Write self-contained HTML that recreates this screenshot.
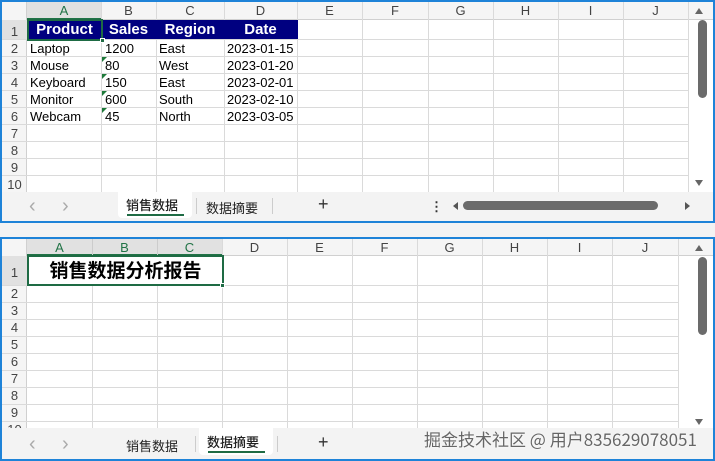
<!DOCTYPE html>
<html><head><meta charset="utf-8"><style>
*{margin:0;padding:0;box-sizing:border-box}
body{width:715px;height:461px;background:#f3f3f3;position:relative;overflow:hidden;font-family:"Liberation Sans","Noto Sans CJK SC",sans-serif}
.p{position:absolute;left:0;width:715px;border:2px solid #1e83d8;background:#fff;overflow:hidden}
.a{position:absolute}
.vl{position:absolute;width:1px;background:#dadada}
.hl{position:absolute;height:1px;background:#dadada}
.ch{position:absolute;font-size:13px;color:#444;text-align:center}
.rh{position:absolute;font-size:13px;color:#444;width:25px;text-align:center}
.c{position:absolute;font-size:13px;color:#000;white-space:nowrap}
.tab{position:absolute;font-size:13px;font-family:"Noto Sans CJK SC",sans-serif;color:#222}
.tri{position:absolute;width:0;height:0;border-top:5px solid #1e7a3a;border-right:5px solid transparent}
.chev{position:absolute;font-size:20px;color:#aaa;line-height:20px}
</style></head><body>

<!-- TOP PANEL -->
<div class="p" style="top:0;height:223px">
 <div class="a" style="left:0;top:0;width:711px;height:18px;background:#f5f5f5;border-bottom:1px solid #d0d0d0"></div>
 <div class="a" style="left:0;top:0;width:25px;height:190px;background:#f5f5f5;border-right:1px solid #d0d0d0"></div>
 <div class="a" style="left:25px;top:0;width:74px;height:18px;background:#e1e1e1;border-bottom:2px solid #217346"></div>
 <div class="a" style="left:0;top:18px;width:25px;height:19px;background:#e1e1e1"></div>
 <div class="vl" style="left:99px;top:0;height:190px"></div>
 <div class="vl" style="left:154px;top:0;height:190px"></div>
 <div class="vl" style="left:222px;top:0;height:190px"></div>
 <div class="vl" style="left:295px;top:0;height:190px"></div>
 <div class="vl" style="left:360px;top:0;height:190px"></div>
 <div class="vl" style="left:426px;top:0;height:190px"></div>
 <div class="vl" style="left:491px;top:0;height:190px"></div>
 <div class="vl" style="left:556px;top:0;height:190px"></div>
 <div class="vl" style="left:621px;top:0;height:190px"></div>
 <div class="vl" style="left:686px;top:0;height:190px"></div>
 <div class="hl" style="left:0;top:37px;width:686px"></div>
 <div class="hl" style="left:0;top:54px;width:686px"></div>
 <div class="hl" style="left:0;top:71px;width:686px"></div>
 <div class="hl" style="left:0;top:88px;width:686px"></div>
 <div class="hl" style="left:0;top:105px;width:686px"></div>
 <div class="hl" style="left:0;top:122px;width:686px"></div>
 <div class="hl" style="left:0;top:139px;width:686px"></div>
 <div class="hl" style="left:0;top:156px;width:686px"></div>
 <div class="hl" style="left:0;top:173px;width:686px"></div>
 <div class="ch" style="left:25px;top:1px;width:74px;color:#217346">A</div>
 <div class="ch" style="left:99px;top:1px;width:55px">B</div>
 <div class="ch" style="left:154px;top:1px;width:68px">C</div>
 <div class="ch" style="left:222px;top:1px;width:73px">D</div>
 <div class="ch" style="left:295px;top:1px;width:65px">E</div>
 <div class="ch" style="left:360px;top:1px;width:66px">F</div>
 <div class="ch" style="left:426px;top:1px;width:65px">G</div>
 <div class="ch" style="left:491px;top:1px;width:65px">H</div>
 <div class="ch" style="left:556px;top:1px;width:65px">I</div>
 <div class="ch" style="left:621px;top:1px;width:65px">J</div>
 <div class="rh" style="left:0;top:22px">1</div>
 <div class="rh" style="left:0;top:39px">2</div>
 <div class="rh" style="left:0;top:56px">3</div>
 <div class="rh" style="left:0;top:73px">4</div>
 <div class="rh" style="left:0;top:90px">5</div>
 <div class="rh" style="left:0;top:107px">6</div>
 <div class="rh" style="left:0;top:124px">7</div>
 <div class="rh" style="left:0;top:141px">8</div>
 <div class="rh" style="left:0;top:158px">9</div>
 <div class="rh" style="left:0;top:175px">10</div>
 <div class="a" style="left:26px;top:18px;width:270px;height:19px;background:#000080"></div>
 <div class="c" style="left:26px;top:19px;width:73px;text-align:center;color:#fff;font-weight:bold;font-size:15px">Product</div>
 <div class="c" style="left:99px;top:19px;width:55px;text-align:center;color:#fff;font-weight:bold;font-size:15px">Sales</div>
 <div class="c" style="left:154px;top:19px;width:68px;text-align:center;color:#fff;font-weight:bold;font-size:15px">Region</div>
 <div class="c" style="left:222px;top:19px;width:73px;text-align:center;color:#fff;font-weight:bold;font-size:15px">Date</div>
 <div class="a" style="left:25px;top:17px;width:76px;height:22px;border:2px solid #1e6b44"></div>
 <div class="a" style="left:98px;top:36px;width:5px;height:5px;background:#1e6b44;border:1px solid #fff"></div>
 <div class="c" style="left:28px;top:39px">Laptop</div><div class="c" style="left:103px;top:39px">1200</div><div class="c" style="left:157px;top:39px">East</div><div class="c" style="left:225px;top:39px">2023-01-15</div>
 <div class="c" style="left:28px;top:56px">Mouse</div><div class="c" style="left:103px;top:56px">80</div><div class="c" style="left:157px;top:56px">West</div><div class="c" style="left:225px;top:56px">2023-01-20</div>
 <div class="c" style="left:28px;top:73px">Keyboard</div><div class="c" style="left:103px;top:73px">150</div><div class="c" style="left:157px;top:73px">East</div><div class="c" style="left:225px;top:73px">2023-02-01</div>
 <div class="c" style="left:28px;top:90px">Monitor</div><div class="c" style="left:103px;top:90px">600</div><div class="c" style="left:157px;top:90px">South</div><div class="c" style="left:225px;top:90px">2023-02-10</div>
 <div class="c" style="left:28px;top:107px">Webcam</div><div class="c" style="left:103px;top:107px">45</div><div class="c" style="left:157px;top:107px">North</div><div class="c" style="left:225px;top:107px">2023-03-05</div>
 <div class="tri" style="left:100px;top:55px"></div><div class="tri" style="left:100px;top:72px"></div><div class="tri" style="left:100px;top:89px"></div><div class="tri" style="left:100px;top:106px"></div>
 <div class="a" style="left:693px;top:6px;width:0;height:0;border-left:4px solid transparent;border-right:4px solid transparent;border-bottom:6px solid #666"></div>
 <div class="a" style="left:696px;top:18px;width:9px;height:78px;background:#6b6b6b;border-radius:5px"></div>
 <div class="a" style="left:693px;top:178px;width:0;height:0;border-left:4px solid transparent;border-right:4px solid transparent;border-top:6px solid #666"></div>
 <div class="a" style="left:0;top:190px;width:711px;height:29px;background:#f3f3f3"></div>
 <div class="chev" style="left:27px;top:194px">&lsaquo;</div>
 <div class="chev" style="left:60px;top:194px">&rsaquo;</div>
 <div class="a" style="left:116px;top:190px;width:74px;height:26px;background:#fff;border-radius:0 0 4px 4px"></div>
 <div class="tab" style="left:124px;top:193px;font-weight:500">销售数据</div>
 <div class="a" style="left:125px;top:212px;width:57px;height:2px;background:#1e6b44"></div>
 <div class="a" style="left:194px;top:196px;width:1px;height:16px;background:#ccc"></div>
 <div class="tab" style="left:204px;top:196px">数据摘要</div>
 <div class="a" style="left:270px;top:196px;width:1px;height:16px;background:#ccc"></div>
 <div class="a" style="left:316px;top:192px;font-size:18px;color:#333">+</div>
 <div class="a" style="left:428px;top:197px;font-size:13px;color:#333;font-weight:bold">⋮</div>
 <div class="a" style="left:451px;top:200px;width:0;height:0;border-top:4px solid transparent;border-bottom:4px solid transparent;border-right:5px solid #555"></div>
 <div class="a" style="left:461px;top:199px;width:195px;height:9px;background:#6b6b6b;border-radius:5px"></div>
 <div class="a" style="left:683px;top:200px;width:0;height:0;border-top:4px solid transparent;border-bottom:4px solid transparent;border-left:5px solid #555"></div>
</div>

<!-- BOTTOM PANEL -->
<div class="p" style="top:237px;height:224px">
 <div class="a" style="left:0;top:0;width:711px;height:17px;background:#f5f5f5;border-bottom:1px solid #d0d0d0"></div>
 <div class="a" style="left:0;top:0;width:25px;height:189px;background:#f5f5f5;border-right:1px solid #d0d0d0"></div>
 <div class="a" style="left:25px;top:0;width:195px;height:17px;background:#e1e1e1;border-bottom:2px solid #217346"></div>
 <div class="a" style="left:0;top:17px;width:25px;height:29px;background:#e1e1e1"></div>
 <div class="vl" style="left:90px;top:0;height:17px;background:#ccc"></div>
 <div class="vl" style="left:155px;top:0;height:17px;background:#ccc"></div>
 <div class="vl" style="left:220px;top:0;height:189px"></div>
 <div class="vl" style="left:90px;top:46px;height:143px"></div>
 <div class="vl" style="left:155px;top:46px;height:143px"></div>
 <div class="vl" style="left:285px;top:0;height:189px"></div>
 <div class="vl" style="left:350px;top:0;height:189px"></div>
 <div class="vl" style="left:415px;top:0;height:189px"></div>
 <div class="vl" style="left:480px;top:0;height:189px"></div>
 <div class="vl" style="left:545px;top:0;height:189px"></div>
 <div class="vl" style="left:610px;top:0;height:189px"></div>
 <div class="vl" style="left:676px;top:0;height:189px"></div>
 <div class="hl" style="left:0;top:46px;width:676px"></div>
 <div class="hl" style="left:0;top:63px;width:676px"></div>
 <div class="hl" style="left:0;top:80px;width:676px"></div>
 <div class="hl" style="left:0;top:97px;width:676px"></div>
 <div class="hl" style="left:0;top:114px;width:676px"></div>
 <div class="hl" style="left:0;top:131px;width:676px"></div>
 <div class="hl" style="left:0;top:148px;width:676px"></div>
 <div class="hl" style="left:0;top:165px;width:676px"></div>
 <div class="hl" style="left:0;top:182px;width:676px"></div>
 <div class="ch" style="left:25px;top:1px;width:65px;color:#217346">A</div>
 <div class="ch" style="left:90px;top:1px;width:65px;color:#217346">B</div>
 <div class="ch" style="left:155px;top:1px;width:65px;color:#217346">C</div>
 <div class="ch" style="left:220px;top:1px;width:65px">D</div>
 <div class="ch" style="left:285px;top:1px;width:65px">E</div>
 <div class="ch" style="left:350px;top:1px;width:65px">F</div>
 <div class="ch" style="left:415px;top:1px;width:65px">G</div>
 <div class="ch" style="left:480px;top:1px;width:65px">H</div>
 <div class="ch" style="left:545px;top:1px;width:65px">I</div>
 <div class="ch" style="left:610px;top:1px;width:66px">J</div>
 <div class="rh" style="left:0;top:26px">1</div>
 <div class="rh" style="left:0;top:47px">2</div>
 <div class="rh" style="left:0;top:64px">3</div>
 <div class="rh" style="left:0;top:81px">4</div>
 <div class="rh" style="left:0;top:98px">5</div>
 <div class="rh" style="left:0;top:115px">6</div>
 <div class="rh" style="left:0;top:132px">7</div>
 <div class="rh" style="left:0;top:149px">8</div>
 <div class="rh" style="left:0;top:166px">9</div>
 <div class="rh" style="left:0;top:183px">10</div>
 <div class="a" style="left:25px;top:16px;width:197px;height:31px;border:2px solid #1e6b44;background:#fff"></div>
 <div class="c" style="left:27px;top:19px;width:193px;text-align:center;font-size:19px;font-weight:bold;font-family:'Noto Sans CJK SC',sans-serif;line-height:24px">销售数据分析报告</div>
 <div class="a" style="left:218px;top:44px;width:5px;height:5px;background:#1e6b44;border:1px solid #fff"></div>
 <div class="a" style="left:693px;top:6px;width:0;height:0;border-left:4px solid transparent;border-right:4px solid transparent;border-bottom:6px solid #666"></div>
 <div class="a" style="left:696px;top:18px;width:9px;height:78px;background:#6b6b6b;border-radius:5px"></div>
 <div class="a" style="left:693px;top:180px;width:0;height:0;border-left:4px solid transparent;border-right:4px solid transparent;border-top:6px solid #666"></div>
 <div class="a" style="left:0;top:189px;width:711px;height:31px;background:#f3f3f3"></div>
 <div class="chev" style="left:27px;top:195px">&lsaquo;</div>
 <div class="chev" style="left:60px;top:195px">&rsaquo;</div>
 <div class="tab" style="left:124px;top:197px">销售数据</div>
 <div class="a" style="left:193px;top:197px;width:1px;height:16px;background:#ccc"></div>
 <div class="a" style="left:197px;top:189px;width:74px;height:27px;background:#fff;border-radius:0 0 4px 4px"></div>
 <div class="tab" style="left:205px;top:193px;font-weight:500">数据摘要</div>
 <div class="a" style="left:206px;top:212px;width:57px;height:2px;background:#1e6b44"></div>
 <div class="a" style="left:275px;top:197px;width:1px;height:16px;background:#ccc"></div>
 <div class="a" style="left:316px;top:193px;font-size:18px;color:#333">+</div>
 <div class="a" style="left:422px;top:187px;font-size:17px;color:#666;font-family:'Noto Sans CJK SC',sans-serif;text-shadow:0 0 2px #fff;white-space:nowrap">掘金技术社区 @ 用户835629078051</div>
</div>
</body></html>
